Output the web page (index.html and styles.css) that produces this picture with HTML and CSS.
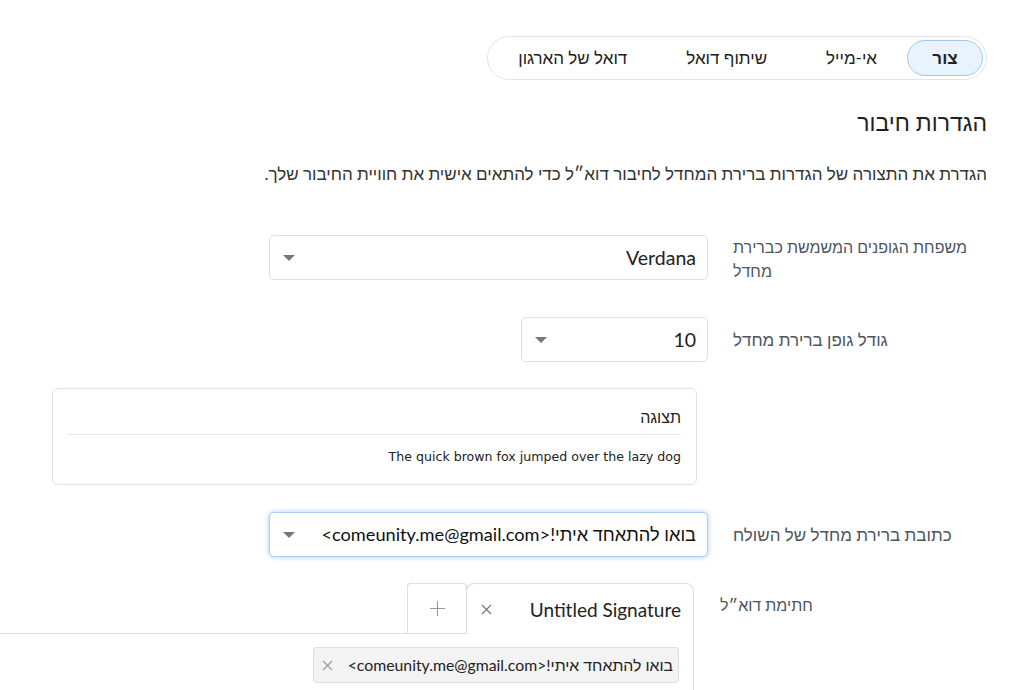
FILE: index.html
```html
<!DOCTYPE html>
<html lang="he" dir="rtl">
<head>
<meta charset="utf-8">
<link rel="stylesheet" href="styles.css">
</head>
<body>
<div class="page">
  <div class="tabs-row">
    <nav class="pill-tabs">
      <span class="pill active">צור</span>
      <span class="pill">אי-מייל</span>
      <span class="pill">שיתוף דואל</span>
      <span class="pill">דואל של הארגון</span>
    </nav>
  </div>

  <h1 class="title">הגדרות חיבור</h1>
  <p class="desc">הגדרת את התצורה של הגדרות ברירת המחדל לחיבור דוא״ל כדי להתאים אישית את חוויית החיבור שלך.</p>

  <div class="row row-font">
    <label class="lbl">משפחת הגופנים המשמשת כברירת מחדל</label>
    <div class="select wide"><span class="val">Verdana</span><span class="caret"></span></div>
  </div>

  <div class="row row-size">
    <label class="lbl">גודל גופן ברירת מחדל</label>
    <div class="select narrow"><span class="val">10</span><span class="caret"></span></div>
  </div>

  <div class="preview">
    <div class="preview-title">תצוגה</div>
    <div class="preview-text" dir="ltr">The quick brown fox jumped over the lazy dog</div>
  </div>

  <div class="row row-from">
    <label class="lbl">כתובת ברירת מחדל של השולח</label>
    <div class="select wide focus"><span class="val">בואו להתאחד איתי!&lt;comeunity.me@gmail.com&gt;</span><span class="caret"></span></div>
  </div>

  <div class="row row-sig">
    <label class="lbl sig-lbl">חתימת דוא״ל</label>
    <div class="sig">
      <div class="sig-tabs">
        <div class="sig-tab"><span class="sig-name">Untitled Signature</span>
          <svg class="ico-x" width="11" height="11" viewBox="0 0 11 11"><path d="M1 1L10 10M10 1L1 10" stroke="#777" stroke-width="1.2" fill="none"/></svg>
        </div>
        <div class="sig-add"><svg width="15" height="15" viewBox="0 0 15 15"><path d="M7.5 0V15M0 7.5H15" stroke="#999" stroke-width="1.1" fill="none"/></svg></div>
      </div>
      <div class="sig-panel">
        <span class="chip"><span>בואו להתאחד איתי!&lt;comeunity.me@gmail.com&gt;</span>
          <svg class="ico-x" width="11" height="11" viewBox="0 0 11 11"><path d="M1 1L10 10M10 1L1 10" stroke="#999" stroke-width="1.1" fill="none"/></svg>
        </span>
      </div>
    </div>
  </div>
</div>
</body>
</html>
```

FILE: styles.css
```css
* { box-sizing: border-box; }
html, body { margin: 0; padding: 0; background: #fff; overflow: hidden; }
body {
  font-family: Lato, "Liberation Sans", "Open Sans", sans-serif;
  color: #222;
  width: 1022px;
  height: 690px;
}
.page {
  padding: 36px 35px 0 0;
}
.tabs-row { display: flex; }
.pill-tabs {
  display: flex;
  align-items: center;
  border: 1px solid #e2e4e8;
  border-radius: 22px;
  height: 44px;
  padding: 0 3px;
}
.pill {
  font-size: 17px;
  color: #222;
  height: 36px;
  line-height: 34px;
  border: 1px solid transparent;
  border-radius: 18px;
  white-space: nowrap;
}
.pill.active {
  background: #e8f3fd;
  border-color: #9cc9ee;
  font-weight: bold;
  width: 76px;
  text-align: center;
}
.pill:nth-child(2) { margin-right: 29px; }
.pill:nth-child(3) { margin-right: 57px; }
.pill:nth-child(4) { margin-right: 57px; margin-left: 26px; }

.title {
  font-size: 23px;
  font-weight: normal;
  margin: 27px 0 0;
  line-height: 30px;
  color: #222;
}
.desc {
  font-size: 17px;
  color: #333;
  margin: 25px 0 0;
  line-height: 24px;
}
.row {
  display: flex;
  align-items: flex-start;
}
.lbl {
  width: 254px;
  flex: none;
  font-size: 16px;
  color: #4f555d;
  line-height: 24px;
  margin-left: 25px;
  display: flex;
  justify-content: flex-end;
}
.row-font { margin-top: 49px; }
.row-font .lbl { display: block; text-align: left; }
.row-size { margin-top: 34px; align-items: center; }
.row-size .lbl, .row-from .lbl { font-size: 17px; }
.row-from { margin-top: 27px; align-items: center; }
.row-sig { margin-top: 26px; }
.sig-lbl { padding-top: 10px; width: 267px; margin-left: 0; }

.select {
  height: 45px;
  border: 1px solid #dcdfe3;
  border-radius: 5px;
  display: flex;
  align-items: center;
  justify-content: space-between;
  padding: 0 11px 0 13px;
  background: #fff;
}
.select.wide { width: 439px; }
.select.narrow { width: 187px; }
.select .val { font-size: 19.5px; color: #222; white-space: nowrap; }
.select.focus {
  border-color: #a9cdf0;
  box-shadow: 0 0 4px 1px rgba(120, 170, 230, 0.45);
}
.select.focus .val { font-size: 18.2px; color: #111; }
.caret {
  width: 0; height: 0;
  border-left: 6px solid transparent;
  border-right: 6px solid transparent;
  border-top: 6px solid #777;
}

.preview {
  margin: 26px 0 0 0;
  width: 645px;
  margin-right: 290px;
  border: 1px solid #e0e2e6;
  border-radius: 6px;
  padding: 15px 15px 19px;
}
.preview-title {
  font-size: 16px;
  color: #222;
  line-height: 26px;
  padding-bottom: 4px;
  border-bottom: 1px solid #e6e8eb;
}
.preview-text {
  font-family: "DejaVu Sans", Verdana, sans-serif;
  font-size: 12.6px;
  color: #222;
  text-align: right;
  padding-top: 13px;
  line-height: 17px;
}

.sig { width: 720px; flex: none; }
.sig-tabs { display: flex; height: 50px; padding-right: 26px; }
.sig-tab {
  position: relative;
  z-index: 1;
  width: 228px;
  border: 1px solid #dcdfe3;
  border-bottom: none;
  border-radius: 8px 8px 0 0;
  display: flex;
  align-items: center;
  justify-content: space-between;
  padding: 0 12px 0 14px;
  background: #fff;
  height: 51px;
}
.sig-name { font-size: 19px; color: #222; }
.ico-x { display: block; flex: none; }
.sig-add {
  width: 60px;
  border: 1px solid #dcdfe3;
  border-bottom: none;
  margin-right: -1px;
  border-radius: 4px 4px 0 0;
  display: flex;
  align-items: center;
  justify-content: center;
  height: 50px;
}
.sig-panel {
  border-top: 1px solid #dcdfe3;
  border-right: 1px solid #dcdfe3;
  margin-right: 26px;
  margin-left: -20px;
  padding: 13px 14px 0 0;
  height: 70px;
}
.chip {
  display: inline-flex;
  align-items: center;
  height: 36px;
  width: 366px;
  padding: 0 5px 0 8px;
  background: #f3f3f3;
  border: 1px solid #dedede;
  border-radius: 3px;
  font-size: 15.8px;
  color: #222;
  justify-content: space-between;
  white-space: nowrap;
}
```
